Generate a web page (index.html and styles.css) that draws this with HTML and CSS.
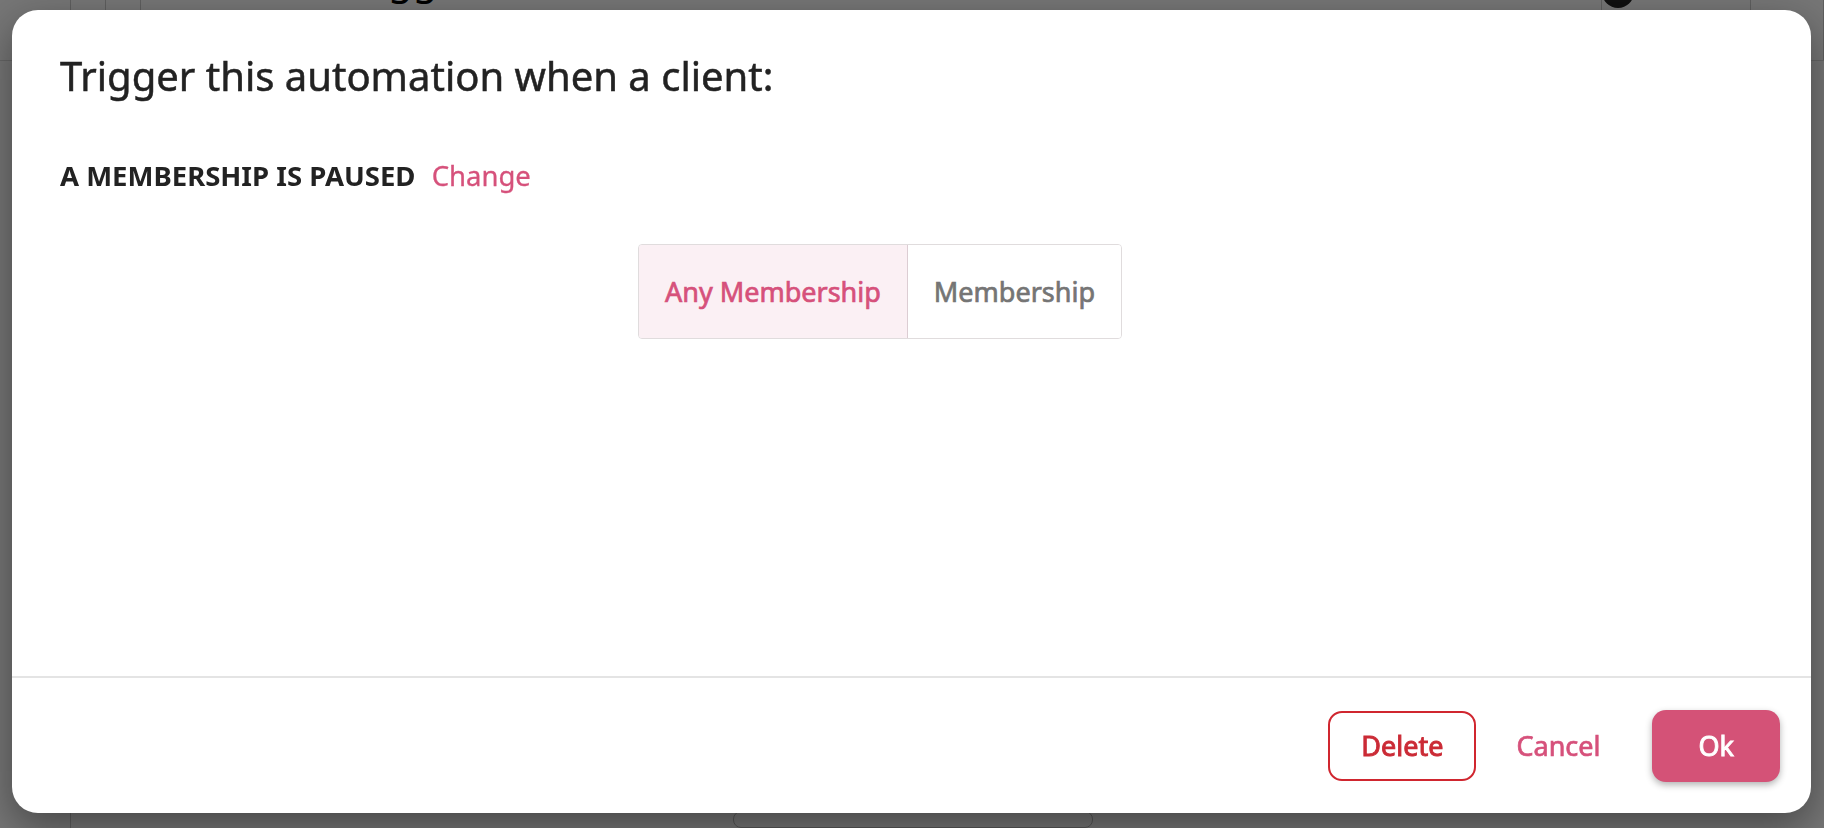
FILE: index.html
```html
<!DOCTYPE html>
<html lang="en">
<head>
    <meta charset="UTF-8">
    <meta name="viewport" content="width=device-width, initial-scale=1.0">
    <title>Automation Trigger</title>
    <link rel="stylesheet" href="styles.css">
</head>
<body>
    <!-- page behind the dialog -->
    <div class="page">
        <div class="topbar">
            <div class="cell cell-first"></div>
            <div class="cell cell-narrow"></div>
            <div class="cell cell-narrow"></div>
            <div class="cell cell-title"><span class="page-title">Trigger</span></div>
            <div class="avatar"></div>
            <div class="cell cell-end"></div>
            <div class="cell cell-end"></div>
        </div>
        <div class="page-bottom">
            <div class="sidebar"></div>
            <div class="page-box"></div>
        </div>
    </div>

    <div class="overlay"></div>

    <div class="modal">
        <div class="modal-body">
            <h2 class="modal-title">Trigger this automation when a client:</h2>

            <div class="trigger-row">
                <span class="trigger-name">A MEMBERSHIP IS PAUSED</span>
                <a href="#" class="link">Change</a>
            </div>

            <div class="toggle-row">
                <div class="toggle">
                    <button class="toggle-option active">Any Membership</button>
                    <button class="toggle-option">Membership</button>
                </div>
            </div>
        </div>

        <div class="modal-footer">
            <button class="btn btn-delete">Delete</button>
            <button class="btn btn-cancel">Cancel</button>
            <button class="btn btn-ok">Ok</button>
        </div>
    </div>
</body>
</html>
```

FILE: styles.css
```css
body {
    margin: 0;
    font-family: "Noto Sans", "Open Sans", sans-serif;
    background: #fff;
    color: #222;
    overflow: hidden;
}

.page {
    height: 100vh;
    display: flex;
    flex-direction: column;
    justify-content: space-between;
}
.topbar {
    display: flex;
    height: 60px;
    border-bottom: 1px solid #ddd;
}
.cell {
    border-right: 1px solid #ccc;
}
.cell-first {
    width: 70px;
}
.cell-narrow {
    width: 34px;
}
.cell-title {
    flex: 1;
    padding-left: 200px;
    overflow: hidden;
}
.page-title {
    display: block;
    margin-top: -49px;
    font-size: 40px;
    color: #000;
}
.avatar {
    width: 32px;
    height: 32px;
    margin: -24px 44px 0 0;
    border-radius: 50%;
    background: #222;
}
.cell-end {
    width: 72px;
}
.page-bottom {
    display: flex;
    height: 40px;
}
.sidebar {
    width: 70px;
    border-right: 1px solid #ccc;
}
.page-box {
    width: 358px;
    margin: 23px 0 0 662px;
    border: 1px solid #bbb;
    border-radius: 8px;
}

.overlay {
    position: fixed;
    inset: 0;
    background: rgba(0, 0, 0, 0.54);
}

.modal {
    position: fixed;
    top: 10px;
    left: 12px;
    right: 13px;
    bottom: 15px;
    background: #fff;
    border-radius: 26px;
    box-shadow: 0 14px 40px rgba(0, 0, 0, 0.4);
    display: flex;
    flex-direction: column;
}
.modal-body {
    flex: 1;
    padding: 38px 48px 0;
}
.modal-title {
    margin: 0;
    font-size: 40px;
    font-weight: 400;
    -webkit-text-stroke: 0.5px #222;
    color: #222;
}
.trigger-row {
    margin-top: 54px;
    font-size: 27.5px;
}
.trigger-name {
    font-weight: 700;
    color: #222;
}
.link {
    margin-left: 9px;
    color: #d6517b;
    -webkit-text-stroke: 0.3px #d6517b;
    text-decoration: none;
}

.toggle-row {
    margin-top: 50px;
    display: flex;
    justify-content: center;
    padding-right: 63px;
}
.toggle {
    display: flex;
    border: 1px solid #e0dcdd;
    border-radius: 4px;
    overflow: hidden;
}
.toggle-option {
    height: 93px;
    padding: 0 26px;
    border: none;
    background: #fff;
    font-family: inherit;
    font-size: 27px;
    font-weight: 400;
    -webkit-text-stroke: 0.7px #757575;
    color: #757575;
    cursor: pointer;
}
.toggle-option.active {
    background: #fbf0f4;
    color: #d6517b;
    -webkit-text-stroke-color: #d6517b;
    border-right: 1px solid #dccdd3;
}

.modal-footer {
    height: 135px;
    border-top: 2px solid #e4e4e4;
    display: flex;
    align-items: center;
    justify-content: flex-end;
    padding-right: 31px;
}
.btn {
    font-family: inherit;
    font-size: 27px;
    font-weight: 400;
    cursor: pointer;
    border-radius: 14px;
}
.btn-delete {
    height: 70px;
    padding: 0 31px;
    background: #fff;
    border: 2px solid #d0262f;
    color: #cb2b36;
    -webkit-text-stroke: 0.9px #cb2b36;
}
.btn-cancel {
    height: 70px;
    padding: 0 22px;
    margin: 0 30px 0 18px;
    background: none;
    border: none;
    color: #d6517b;
    -webkit-text-stroke: 0.7px #d6517b;
}
.btn-ok {
    height: 72px;
    padding: 0 46px;
    background: #d45277;
    border: none;
    color: #fff;
    -webkit-text-stroke: 0.9px #fff;
    box-shadow: 0 3px 7px rgba(0, 0, 0, 0.3);
}
```
